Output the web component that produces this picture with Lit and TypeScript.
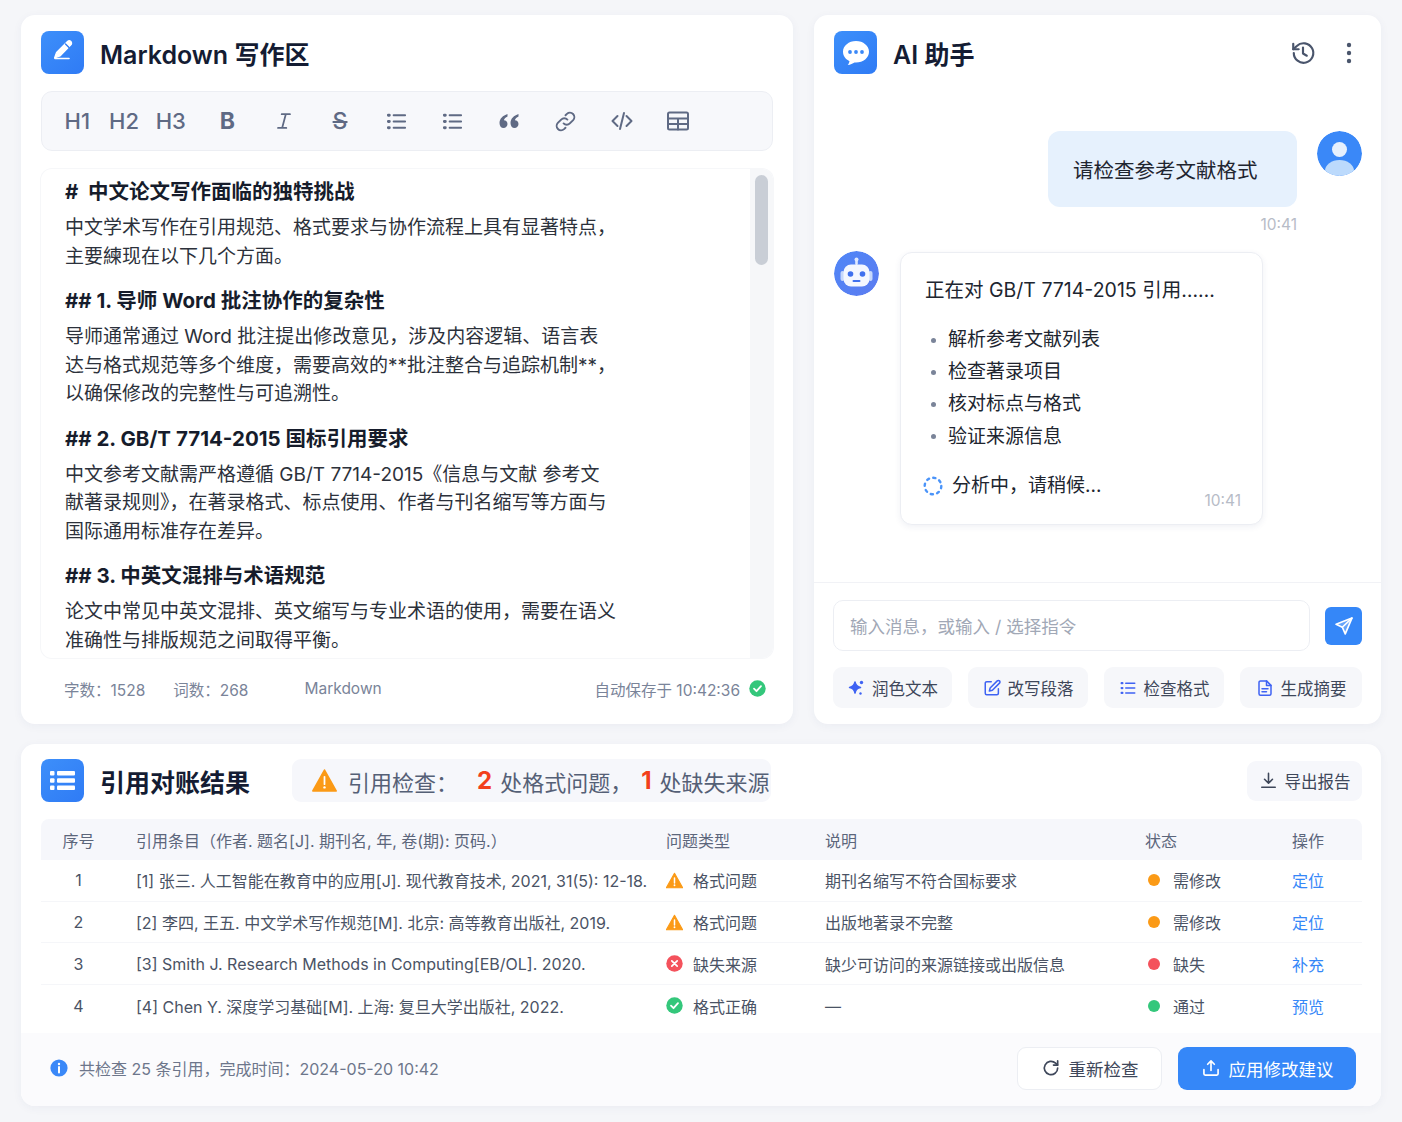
import { LitElement, html, css, svg } from "lit";
import { customElement } from "lit/decorators.js";

const ic = (size: number, body: unknown, vb = 24) => html`<svg
  width=${size}
  height=${size}
  viewBox="0 0 ${vb} ${vb}"
  fill="none"
  stroke="currentColor"
  stroke-width="2"
  stroke-linecap="round"
  stroke-linejoin="round"
>
  ${body}
</svg>`;

const listIcon = svg`<path d="M9 5.5h12M9 12h12M9 18.500h12"/><path d="M3.500 5.500h1M3.500 12h1M3.500 18.500h1" stroke-width="3"/>`;
const warnIcon = html`<svg width="18" height="17" viewBox="0 0 18 17">
  <path d="M9 .8 17.600 16.200H.4Z" fill="#fb9a16" stroke="#fb9a16" stroke-width="1.200" stroke-linejoin="round" />
  <path d="M9 5.800v5.400" stroke="#fff" stroke-width="1.600" stroke-linecap="round" />
  <circle cx="9" cy="13.600" r="1" fill="#fff" />
</svg>`;
const errIcon = html`<svg width="17" height="17" viewBox="0 0 17 17">
  <circle cx="8.500" cy="8.500" r="8.200" fill="#f4525c" />
  <path d="m5.800 5.800 5.400 5.400m0-5.400-5.400 5.400" stroke="#fff" stroke-width="1.700" stroke-linecap="round" />
</svg>`;
const okIcon = html`<svg width="17" height="17" viewBox="0 0 17 17">
  <circle cx="8.500" cy="8.500" r="8.200" fill="#34c77b" />
  <path d="m5 8.700 2.500 2.500L12 6.200" fill="none" stroke="#fff" stroke-width="1.800" stroke-linecap="round" stroke-linejoin="round" />
</svg>`;

const paragraphs = [
  {
    h: "#\u00a0\u00a0中文论文写作面临的独特挑战",
    lines: ["中文学术写作在引用规范、格式要求与协作流程上具有显著特点，", "主要練现在以下几个方面。"],
  },
  {
    h: "## 1. 导师 Word 批注协作的复杂性",
    lines: [
      "导师通常通过 Word 批注提出修改意见，涉及内容逻辑、语言表",
      "达与格式规范等多个维度，需要高效的**批注整合与追踪机制**，",
      "以确保修改的完整性与可追溯性。",
    ],
  },
  {
    h: "## 2. GB/T 7714-2015 国标引用要求",
    lines: [
      "中文参考文献需严格遵循 GB/T 7714-2015《信息与文献 参考文",
      "献著录规则》，在著录格式、标点使用、作者与刊名缩写等方面与",
      "国际通用标准存在差异。",
    ],
  },
  {
    h: "## 3. 中英文混排与术语规范",
    lines: ["论文中常见中英文混排、英文缩写与专业术语的使用，需要在语义", "准确性与排版规范之间取得平衡。"],
  },
];

const rows = [
  {
    n: 1,
    ref: "[1] 张三. 人工智能在教育中的应用[J]. 现代教育技术, 2021, 31(5): 12-18.",
    icon: warnIcon,
    type: "格式问题",
    note: "期刊名缩写不符合国标要求",
    dot: "#fb9a16",
    status: "需修改",
    act: "定位",
  },
  {
    n: 2,
    ref: "[2] 李四, 王五. 中文学术写作规范[M]. 北京: 高等教育出版社, 2019.",
    icon: warnIcon,
    type: "格式问题",
    note: "出版地著录不完整",
    dot: "#fb9a16",
    status: "需修改",
    act: "定位",
  },
  {
    n: 3,
    ref: "[3] Smith J. Research Methods in Computing[EB/OL]. 2020.",
    icon: errIcon,
    type: "缺失来源",
    note: "缺少可访问的来源链接或出版信息",
    dot: "#f4525c",
    status: "缺失",
    act: "补充",
  },
  {
    n: 4,
    ref: "[4] Chen Y. 深度学习基础[M]. 上海: 复旦大学出版社, 2022.",
    icon: okIcon,
    type: "格式正确",
    note: "—",
    dot: "#34c77b",
    status: "通过",
    act: "预览",
  },
];

const chips = [
  {
    label: "润色文本",
    icon: html`<svg width="18" height="18" viewBox="0 0 18 18" fill="currentColor">
      <path d="M8 3c.6 3.400 2.100 4.900 5.500 5.500C10.100 9.100 8.600 10.600 8 14c-.6-3.400-2.100-4.900-5.500-5.500C5.900 7.900 7.400 6.400 8 3Z" stroke="currentColor" stroke-width="1.500" stroke-linejoin="round" />
      <circle cx="14.500" cy="3.500" r="1.700" />
      <circle cx="13.500" cy="14.500" r="1.200" />
    </svg>`,
  },
  {
    label: "改写段落",
    icon: ic(
      18,
      svg`<path d="M11 3.500H5a2 2 0 0 0-2 2V19a2 2 0 0 0 2 2h13.500a2 2 0 0 0 2-2v-6"/><path d="M19 2.500a2.100 2.100 0 0 1 3 3L12.500 15l-4 1 1-4Z"/>`
    ),
  },
  { label: "检查格式", icon: ic(18, listIcon) },
  {
    label: "生成摘要",
    icon: ic(
      18,
      svg`<path d="M14 2.500H6a2 2 0 0 0-2 2v15a2 2 0 0 0 2 2h12a2 2 0 0 0 2-2V8.500Z"/><path d="M14 2.500v6h6M8 13h8M8 17h6"/>`
    ),
  },
];

@customElement("app-root")
export class AppRoot extends LitElement {
  static styles = css`
    :host {
      display: block;
      width: 1402px;
      height: 1122px;
      box-sizing: border-box;
      padding: 15px 21px 16px;
      background: #f5f6f9;
      font-family: Inter, "Noto Sans CJK SC", sans-serif;
      color: #262b36;
    }
    * {
      box-sizing: border-box;
    }
    svg {
      display: block;
      flex: none;
    }
    .page {
      display: grid;
      grid-template-columns: 772px 567px;
      grid-template-rows: 709px 362px;
      gap: 20px 21px;
    }
    .card {
      background: #fff;
      border-radius: 14px;
      box-shadow: 0 2px 10px rgba(40, 60, 110, 0.05);
      display: flex;
      flex-direction: column;
      min-width: 0;
      overflow: hidden;
    }
    .head {
      display: flex;
      align-items: center;
      gap: 16px;
      height: 43px;
      font-size: 25px;
      font-weight: 600;
      color: #141c33;
      white-space: nowrap;
    }
    .logo {
      width: 43px;
      height: 43px;
      border-radius: 8px;
      background: linear-gradient(140deg, #3d8ffa, #2f7bf5);
      display: flex;
      align-items: center;
      justify-content: center;
      color: #fff;
      flex: none;
    }

    .editor {
      padding: 16px 20px 0;
    }
    .toolbar {
      display: flex;
      align-items: center;
      height: 60px;
      margin-top: 17px;
      padding-left: 12px;
      background: #f7f8fb;
      border: 1px solid #eceef3;
      border-radius: 11px;
      color: #5f6a84;
      font-size: 22px;
      font-weight: 500;
    }
    .tb {
      width: 56.4px;
      display: flex;
      align-items: center;
      justify-content: center;
    }
    .tb.h {
      width: 46.700px;
    }
    .tb.b {
      font-weight: 700;
      font-size: 23px;
      margin-left: 5px;
    }
    .tb.s {
      text-decoration: line-through;
      font-size: 23px;
    }
    .doc {
      display: flex;
      height: 489px;
      margin-top: 18px;
      border-radius: 11px;
      box-shadow: 0 0 0 1px #f6f7f9;
      overflow: hidden;
    }
    .doc-text {
      flex: 1;
      padding: 8px 0 0 24px;
      font-size: 19px;
      line-height: 28.500px;
      color: #2c313b;
      white-space: nowrap;
    }
    .doc-text h3 {
      margin: 0 0 7px;
      font-size: 20.500px;
      line-height: 30px;
      font-weight: 700;
      color: #161c2b;
    }
    .doc-text p {
      margin: 0 0 15px;
    }
    .track {
      width: 23px;
      background: #f6f7f9;
      padding: 6px 5px;
    }
    .thumb {
      height: 90px;
      border-radius: 7px;
      background: #c9ced6;
    }
    .doc-foot {
      display: flex;
      align-items: center;
      height: 61px;
      padding: 0 7px 0 23px;
      font-size: 15.500px;
      color: #7a8499;
      white-space: nowrap;
    }
    .doc-foot .gap {
      margin-left: 28px;
    }
    .doc-foot .fmt {
      margin-left: 56px;
    }
    .doc-foot .saved {
      margin-left: auto;
      display: flex;
      align-items: center;
      gap: 9px;
    }

    .chat {
      position: relative;
    }
    .chat-head {
      padding: 16px 20px 0;
      display: flex;
      align-items: center;
    }
    .chat-tools {
      margin-left: auto;
      display: flex;
      align-items: center;
      gap: 29px;
      color: #4a556c;
      padding-right: 8px;
    }
    .msgs {
      flex: 1;
      padding: 57px 19px 0 20px;
      border-bottom: 1px solid #f1f2f6;
    }
    .u-row {
      display: flex;
      justify-content: flex-end;
      gap: 20px;
    }
    .u-bubble {
      width: 249px;
      height: 76px;
      border-radius: 12px;
      background: #e6f1fd;
      font-size: 20.500px;
      color: #1f2530;
      display: flex;
      align-items: center;
      padding-left: 25px;
    }
    .avatar {
      width: 45px;
      height: 45px;
      border-radius: 50%;
      flex: none;
    }
    .u-time {
      margin: 8px 65px 0 0;
      text-align: right;
      font-size: 15.500px;
      line-height: 19px;
      color: #b7bcc7;
    }
    .b-row {
      display: flex;
      gap: 21px;
      margin-top: 17px;
    }
    .b-bubble {
      width: 363px;
      height: 273px;
      margin-top: 1px;
      padding: 21px 21px 0 24px;
      background: #fff;
      border: 1px solid #eceef3;
      border-radius: 12px;
      box-shadow: 0 2px 6px rgba(40, 60, 110, 0.07);
      font-size: 19.500px;
      color: #20252f;
    }
    .b-title {
      line-height: 32px;
    }
    .b-list {
      list-style: none;
      margin: 18px 0 0;
      padding: 0;
      font-size: 19px;
      line-height: 32.200px;
    }
    .b-list li {
      display: flex;
      align-items: center;
      gap: 12px;
      padding-left: 6px;
    }
    .b-list li::before {
      content: "";
      width: 5px;
      height: 5px;
      border-radius: 50%;
      background: #7a8499;
    }
    .b-status {
      display: flex;
      align-items: center;
      gap: 9px;
      margin-top: 19px;
      font-size: 19px;
      line-height: 28px;
      margin-left: -2px;
    }
    .b-time {
      margin: -10px 0 0 auto;
      padding-top: 1px;
      text-align: right;
      font-size: 15.500px;
      line-height: 19px;
      color: #b7bcc7;
    }
    .composer {
      padding: 17px 19px 16px 19px;
    }
    .input-row {
      display: flex;
      align-items: center;
      gap: 15px;
    }
    .input {
      flex: 1;
      height: 51px;
      border: 1px solid #eceef3;
      border-radius: 10px;
      padding-left: 16px;
      display: flex;
      align-items: center;
      font-size: 17.500px;
      color: #a1a8b6;
    }
    .send {
      width: 37px;
      height: 38px;
      border-radius: 6px;
      background: #3587f8;
      color: #fff;
      display: flex;
      align-items: center;
      justify-content: center;
    }
    .chips {
      display: grid;
      grid-template-columns: 119px 120px 120px 122px;
      justify-content: space-between;
      margin-top: 16px;
    }
    .chip {
      height: 41px;
      border-radius: 9px;
      background: #f6f7fa;
      display: flex;
      align-items: center;
      justify-content: center;
      gap: 7px;
      font-size: 16.500px;
      color: #3e475a;
    }
    .chip svg {
      color: #3f63f3;
    }

    .results {
      grid-column: 1 / 3;
    }
    .res-head {
      display: flex;
      align-items: center;
      padding: 15px 19px 0 20px;
    }
    .summary {
      margin-left: 42px;
      width: 479px;
      height: 43px;
      border-radius: 9px;
      background: #f6f7fb;
      display: flex;
      align-items: center;
      padding-left: 20px;
      font-size: 22px;
      color: #556076;
      white-space: nowrap;
    }
    .summary b {
      color: #f2401b;
      font-weight: 700;
      font-size: 24px;
      margin: 0 8px 0 19px;
    }
    .summary b + span + b {
      margin-left: 9px;
    }
    .summary svg {
      margin-right: 11px;
    }
    .export {
      margin-left: auto;
      width: 115px;
      height: 40px;
      border-radius: 9px;
      background: #f6f7fb;
      display: flex;
      align-items: center;
      justify-content: center;
      gap: 7px;
      font-size: 16.500px;
      color: #3e475a;
    }
    .table {
      margin: 17px 19px 0 20px;
    }
    .tr {
      display: grid;
      grid-template-columns: 95px 530px 159px 320px 147px 70px;
      align-items: center;
      height: 41.700px;
      font-size: 16px;
      color: #4a5365;
      border-bottom: 1px solid #f5f6f9;
      white-space: nowrap;
    }
    .tr:last-child {
      border-bottom: 0;
    }
    .tr.th {
      height: 41px;
      background: #f6f7fb;
      border-radius: 8px 8px 0 0;
      border: 0;
      color: #5c667b;
    }
    .num {
      padding-right: 20px;
      text-align: center;
    }
    .cell {
      display: flex;
      align-items: center;
    }
    .type {
      gap: 10px;
    }
    .type svg {
      width: 17px;
    }
    .dot {
      width: 12px;
      height: 12px;
      border-radius: 50%;
      margin: 0 13px 0 3px;
    }
    .act {
      color: #3587f8;
    }
    .res-foot {
      flex: 1;
      margin-top: 6px;
      background: #fbfbfd;
      display: flex;
      align-items: center;
      padding: 0 25px 2px 29px;
      font-size: 16px;
      color: #6d768b;
    }
    .res-foot .info {
      margin-right: 11px;
    }
    .btns {
      margin-left: auto;
      display: flex;
      gap: 16px;
    }
    .btn {
      height: 43px;
      border-radius: 9px;
      display: flex;
      align-items: center;
      justify-content: center;
      gap: 8px;
      font-size: 17.500px;
    }
    .btn.ghost {
      width: 145px;
      background: #fff;
      border: 1px solid #eceef3;
      color: #3e475a;
    }
    .btn.primary {
      width: 178px;
      background: #3587f8;
      color: #fff;
    }
  `;

  private renderEditor() {
    return html`<section class="card editor">
      <div class="head">
        <div class="logo">
          ${ic(
            32,
            svg`<path d="M8 21.500h14" stroke-width="1.600"/><path d="M20.500 4.500a2.400 2.400 0 0 1 3.400 3.400L13 19l-5.500 2 2-5.500Z" fill="#fff" stroke-width="1.200"/><path d="M18.500 7l3.500 3.500" stroke="#2f7bf5" stroke-width="1.400"/>`,
            32
          )}
        </div>
        Markdown 写作区
      </div>
      <div class="toolbar">
        <span class="tb h">H1</span><span class="tb h">H2</span><span class="tb h">H3</span>
        <span class="tb b">B</span>
        <span class="tb">${ic(22, svg`<path d="M9.500 4.500h9M5.500 19.500h9M14 4.500l-4 15"/>`)}</span>
        <span class="tb s">S</span>
        <span class="tb">${ic(23, listIcon)}</span>
        <span class="tb">${ic(23, listIcon)}</span>
        <span class="tb"
          >${html`<svg width="22" height="18" viewBox="0 0 22 18" fill="currentColor">
            <path d="M9.500 2C5 3.500 1.500 6.500 1.500 11c0 3 1.700 5 4 5s4-1.700 4-4-1.600-3.800-3.600-3.800c.5-1.700 1.800-3 3.600-3.800Z" />
            <path d="M20.500 2c-4.500 1.500-8 4.500-8 9 0 3 1.700 5 4 5s4-1.700 4-4-1.600-3.800-3.600-3.800c.5-1.700 1.800-3 3.600-3.800Z" />
          </svg>`}</span
        >
        <span class="tb"
          >${ic(
            23,
            svg`<path d="M10 14a4.500 4.500 0 0 0 6.500 0l3.500-3.500a4.600 4.600 0 0 0-6.500-6.500L12 5.500"/><path d="M14 10a4.500 4.500 0 0 0-6.500 0L4 13.500a4.600 4.600 0 0 0 6.500 6.500l1.500-1.500"/>`
          )}</span
        >
        <span class="tb">${ic(24, svg`<path d="m7.500 7-5 5 5 5M16.500 7l5 5-5 5M14 4l-4 16"/>`)}</span>
        <span class="tb">
          ${ic(
            24,
            svg`<rect x="2" y="3.500" width="20" height="17" rx="1.500"/><path d="M2 9.500h20M2 15h20M12 9.500v11"/>`
          )}
        </span>
      </div>
      <div class="doc">
        <div class="doc-text">
          ${paragraphs.map(
            (p) => html`<h3>${p.h}</h3>
              <p>${p.lines.map((l) => html`${l}<br />`)}</p>`
          )}
        </div>
        <div class="track"><div class="thumb"></div></div>
      </div>
      <div class="doc-foot">
        <span>字数：1528</span>
        <span class="gap">词数：268</span>
        <span class="fmt">Markdown</span>
        <span class="saved">自动保存于 10:42:36 ${okIcon}</span>
      </div>
    </section>`;
  }

  private renderChat() {
    return html`<section class="card chat">
      <div class="chat-head">
        <div class="head">
          <div class="logo">
            <svg width="34" height="34" viewBox="0 0 34 34">
              <path
                d="M17 5C9.800 5 4 9.800 4 15.800c0 4 2.600 7.500 6.500 9.400-.2 1.500-.9 2.900-1.800 3.800 2.700-.2 5.100-1.300 6.800-2.500.5.100 1 .1 1.500.1 7.200 0 13-4.800 13-10.800S24.200 5 17 5Z"
                fill="#fff"
              />
              <circle cx="11" cy="16" r="1.900" fill="#3a88f8" />
              <circle cx="17" cy="16" r="1.900" fill="#3a88f8" />
              <circle cx="23" cy="16" r="1.900" fill="#3a88f8" />
            </svg>
          </div>
          AI 助手
        </div>
        <div class="chat-tools">
          ${ic(
            26,
            svg`<path d="M3.500 12a9 9 0 1 0 2.800-6.500L3 8.500"/><path d="M3 3.500v5h5"/><path d="M12 7v5.500l3.500 2"/>`
          )}
          <svg width="8" height="22" viewBox="0 0 8 22" fill="currentColor">
            <circle cx="4" cy="3" r="2.200" />
            <circle cx="4" cy="11" r="2.200" />
            <circle cx="4" cy="19" r="2.200" />
          </svg>
        </div>
      </div>
      <div class="msgs">
        <div class="u-row">
          <div class="u-bubble">请检查参考文献格式</div>
          <svg class="avatar" viewBox="0 0 45 45">
            <defs>
              <clipPath id="uc"><circle cx="22.500" cy="22.500" r="22.500" /></clipPath>
            </defs>
            <circle cx="22.500" cy="22.500" r="22.500" fill="#3a88f8" />
            <g clip-path="url(#uc)">
              <circle cx="22.500" cy="18.500" r="7.500" fill="#e6f0fd" />
              <ellipse cx="22.500" cy="40" rx="14.500" ry="11" fill="#bcdafc" />
            </g>
          </svg>
        </div>
        <div class="u-time">10:41</div>
        <div class="b-row">
          <svg class="avatar" viewBox="0 0 45 45">
            <defs>
              <linearGradient id="bg" x1="0" y1="0" x2="1" y2="1">
                <stop offset="0" stop-color="#4f86f7" />
                <stop offset="1" stop-color="#5c7cf0" />
              </linearGradient>
            </defs>
            <circle cx="22.500" cy="22.500" r="22.500" fill="url(#bg)" />
            <rect x="21.200" y="8" width="2.600" height="6" rx="1.300" fill="#dfe9ff" />
            <circle cx="22.500" cy="8.500" r="2" fill="#dfe9ff" />
            <rect x="6.500" y="20" width="4" height="10" rx="2" fill="#c7d8fb" />
            <rect x="34.500" y="20" width="4" height="10" rx="2" fill="#c7d8fb" />
            <rect x="9.500" y="13.500" width="26" height="22" rx="7.500" fill="#f4f7ff" />
            <circle cx="16.500" cy="23" r="2.800" fill="#3f70ee" />
            <circle cx="28.500" cy="23" r="2.800" fill="#3f70ee" />
            <path d="M19.500 30h6" stroke="#3f70ee" stroke-width="2" stroke-linecap="round" />
          </svg>
          <div class="b-bubble">
            <div class="b-title">正在对 GB/T 7714-2015 引用……</div>
            <ul class="b-list">
              <li>解析参考文献列表</li>
              <li>检查著录项目</li>
              <li>核对标点与格式</li>
              <li>验证来源信息</li>
            </ul>
            <div class="b-status">
              <svg width="20" height="20" viewBox="0 0 20 20" fill="none">
                <circle
                  cx="10"
                  cy="10"
                  r="8.300"
                  stroke="#4b94f9"
                  stroke-width="2.400"
                  stroke-linecap="round"
                  stroke-dasharray="2.200 4.320"
                />
              </svg>
              分析中，请稍候...
            </div>
            <div class="b-time">10:41</div>
          </div>
        </div>
      </div>
      <div class="composer">
        <div class="input-row">
          <div class="input">输入消息，或输入 / 选择指令</div>
          <div class="send">
            ${ic(
              20,
              svg`<path d="M21.500 2.500 2.500 10l7.500 3.500 3.500 8Z" fill="rgba(255,255,255,.25)"/><path d="M21.500 2.500 10 13.500"/>`
            )}
          </div>
        </div>
        <div class="chips">
          ${chips.map((c) => html`<div class="chip">${c.icon}${c.label}</div>`)}
        </div>
      </div>
    </section>`;
  }

  private renderResults() {
    return html`<section class="card results">
      <div class="res-head">
        <div class="head">
          <div class="logo">
            <svg width="27" height="25" viewBox="0 0 27 25" fill="#fff">
              <rect x="1" y="3" width="4.500" height="4.500" rx="1" />
              <rect x="1" y="10.300" width="4.500" height="4.500" rx="1" />
              <rect x="1" y="17.500" width="4.500" height="4.500" rx="1" />
              <rect x="8" y="3" width="18" height="4.500" rx="1" />
              <rect x="8" y="10.300" width="18" height="4.500" rx="1" />
              <rect x="8" y="17.500" width="18" height="4.500" rx="1" />
            </svg>
          </div>
          引用对账结果
        </div>
        <div class="summary">
          <svg width="25" height="23" viewBox="0 0 18 17">
            <path d="M9 .8 17.600 16.200H.4Z" fill="#fb9a16" stroke="#fb9a16" stroke-width="1.200" stroke-linejoin="round" />
            <path d="M9 5.800v5.400" stroke="#fff" stroke-width="1.300" stroke-linecap="round" />
            <circle cx="9" cy="13.600" r=".9" fill="#fff" />
          </svg>
          <span>引用检查：</span><b>2</b><span>处格式问题，</span><b>1</b><span>处缺失来源</span>
        </div>
        <div class="export">
          ${ic(19, svg`<path d="M12 3v12M7 10.500l5 5 5-5M3.500 20.500h17"/>`)} 导出报告
        </div>
      </div>
      <div class="table">
        <div class="tr th">
          <span class="num">序号</span><span>引用条目（作者. 题名[J]. 期刊名, 年, 卷(期): 页码.）</span><span>问题类型</span><span>说明</span><span>状态</span><span>操作</span>
        </div>
        ${rows.map(
          (r) => html`<div class="tr">
            <span class="num">${r.n}</span>
            <span>${r.ref}</span>
            <span class="cell type">${r.icon}${r.type}</span>
            <span>${r.note}</span>
            <span class="cell"><i class="dot" style="background:${r.dot}"></i>${r.status}</span>
            <span class="act">${r.act}</span>
          </div>`
        )}
      </div>
      <div class="res-foot">
        <svg class="info" width="18" height="18" viewBox="0 0 18 18">
          <circle cx="9" cy="9" r="8.600" fill="#3a88f8" />
          <circle cx="9" cy="5" r="1.200" fill="#fff" />
          <path d="M9 8v5.500" stroke="#fff" stroke-width="2" stroke-linecap="round" />
        </svg>
        共检查 25 条引用，完成时间：2024-05-20 10:42
        <div class="btns">
          <div class="btn ghost">
            ${ic(20, svg`<path d="M20 12a8 8 0 1 1-2.500-5.800L20 8.500"/><path d="M20 3.500v5h-5"/>`)} 重新检查
          </div>
          <div class="btn primary">
            ${ic(20, svg`<path d="M12 15V4M8 7.500 12 3.500l4 4M3.500 14v5a1.500 1.500 0 0 0 1.500 1.500h14a1.500 1.500 0 0 0 1.500-1.500v-5"/>`)} 应用修改建议
          </div>
        </div>
      </div>
    </section>`;
  }

  protected render() {
    return html`<div class="page">
      ${this.renderEditor()} ${this.renderChat()} ${this.renderResults()}
    </div>`;
  }
}

declare global {
  interface HTMLElementTagNameMap {
    "app-root": AppRoot;
  }
}
